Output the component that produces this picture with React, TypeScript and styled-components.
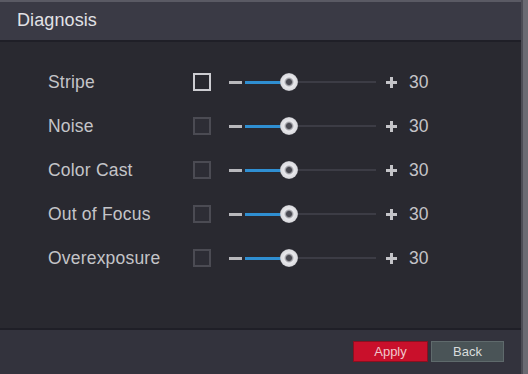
import React from 'react';
import styled, { createGlobalStyle } from 'styled-components';

const GlobalStyle = createGlobalStyle`
  html, body {
    margin: 0;
    padding: 0;
    background: #6a6a72;
  }
  body {
    font-family: 'Liberation Sans', Arial, sans-serif;
  }
`;

const Window = styled.div`
  width: 523px;
  height: 374px;
  display: flex;
  flex-direction: column;
  background-color: #292930;
  border-right: 2px solid #4c4c55;
  box-sizing: border-box;
  overflow: hidden;
`;

const Header = styled.div`
  height: 42px;
  box-sizing: border-box;
  border-top: 2px solid #5a5a64;
  border-bottom: 2px solid #1f1f27;
  background-color: #3a3a45;
  display: flex;
  align-items: center;
  padding: 0 0 2px 17px;
`;

const Title = styled.div`
  font-size: 18px;
  color: #e2e2e6;
  letter-spacing: 0.1px;
`;

const Body = styled.div`
  flex: 1;
  display: flex;
  flex-direction: column;
  padding-top: 18px;
`;

const Row = styled.div`
  height: 44px;
  display: flex;
  align-items: center;
  padding-left: 48px;
`;

const Label = styled.div`
  width: 145px;
  font-size: 17.5px;
  color: #c4c4c8;
  letter-spacing: 0.2px;
`;

const Checkbox = styled.div<{ active: boolean }>`
  width: 18px;
  height: 18px;
  box-sizing: border-box;
  border: 2px solid ${(p) => (p.active ? '#cdcdd2' : '#4b4b53')};
  background-color: ${(p) => (p.active ? 'transparent' : '#2d2d35')};
  margin-right: 18px;
`;

const Minus = styled.div`
  width: 13px;
  height: 3px;
  background-color: #b8b8bc;
  margin-right: 3px;
`;

const Track = styled.div`
  position: relative;
  width: 131px;
  height: 2px;
  background-color: #3c3c45;
  margin-right: 10px;
`;

const Fill = styled.div`
  position: absolute;
  left: 0;
  top: -0.5px;
  height: 3px;
  background-color: #2f8fd2;
`;

const Knob = styled.div`
  position: absolute;
  top: 50%;
  width: 18px;
  height: 18px;
  margin-left: -9px;
  margin-top: -9px;
  border-radius: 50%;
  background: radial-gradient(circle, #4a4a52 0 2.5px, #9a9aa0 3.5px, #e8e8ec 5px, #dcdce0 8px, #b0b0b6 9px);
`;

const Plus = styled.div`
  position: relative;
  width: 11px;
  height: 11px;
  margin-right: 12px;

  &::before,
  &::after {
    content: '';
    position: absolute;
    background-color: #c4c4c8;
  }
  &::before {
    left: 0;
    top: 4px;
    width: 11px;
    height: 3px;
  }
  &::after {
    left: 4px;
    top: 0;
    width: 3px;
    height: 11px;
  }
`;

const Value = styled.div`
  font-size: 17.5px;
  color: #c4c4c8;
`;

const Footer = styled.div`
  height: 46px;
  box-sizing: border-box;
  border-top: 2px solid #1f1f27;
  background-color: #33333d;
  display: flex;
  align-items: center;
  justify-content: flex-end;
  gap: 3px;
  padding: 0 17px 2px 0;
`;

const Button = styled.button<{ primary?: boolean }>`
  width: ${(p) => (p.primary ? '75px' : '73px')};
  height: 21px;
  padding: 0;
  font-family: 'Liberation Sans', Arial, sans-serif;
  font-size: 13px;
  color: ${(p) => (p.primary ? '#f0c8cc' : '#d8dcdc')};
  background-color: ${(p) => (p.primary ? '#c9102b' : '#4a5457')};
  border: 1px solid ${(p) => (p.primary ? '#8a1020' : '#5f6a6c')};
  box-sizing: border-box;
`;

const items = ['Stripe', 'Noise', 'Color Cast', 'Out of Focus', 'Overexposure'];

const Slider: React.FC<{ value: number }> = ({ value }) => {
  const x = Math.round((value / 100) * 131) + 5;
  return (
    <Track>
      <Fill style={{ width: x }} />
      <Knob style={{ left: x }} />
    </Track>
  );
};

export default function App() {
  return (
    <>
      <GlobalStyle />
      <Window>
        <Header>
          <Title>Diagnosis</Title>
        </Header>
        <Body>
          {items.map((name, i) => (
            <Row key={name}>
              <Label>{name}</Label>
              <Checkbox active={i === 0} />
              <Minus />
              <Slider value={30} />
              <Plus />
              <Value>30</Value>
            </Row>
          ))}
        </Body>
        <Footer>
          <Button primary>Apply</Button>
          <Button>Back</Button>
        </Footer>
      </Window>
    </>
  );
}
